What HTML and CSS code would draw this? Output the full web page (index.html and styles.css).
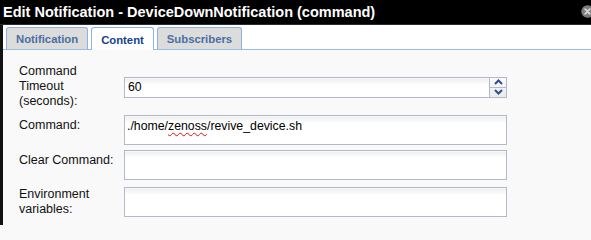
FILE: index.html
```html
<!DOCTYPE html>
<html>
<head>
<meta charset="utf-8">
<link rel="stylesheet" href="styles.css">
</head>
<body>
<div class="window">
  <div class="header">
    <span class="title">Edit Notification - DeviceDownNotification (command)</span>
    <span class="close">
      <svg width="13" height="13" viewBox="0 0 13 13">
        <circle cx="6.5" cy="6.5" r="6.2" fill="#7c7c7c"/>
        <path d="M4.2 4.2 L8.8 8.8 M8.8 4.2 L4.2 8.8" stroke="#d6d6d6" stroke-width="1.8" stroke-linecap="round"/>
      </svg>
    </span>
  </div>
  <div class="body">
    <div class="tabstrip">
      <div class="tab">Notification</div>
      <div class="tab active">Content</div>
      <div class="tab">Subscribers</div>
    </div>
    <div class="panel">
      <div class="row row-center">
        <label class="label label-tall">Command Timeout (seconds):</label>
        <div class="field spinner">
          <span class="value">60</span>
          <div class="spin">
            <span class="spin-btn">
              <svg width="9" height="6" viewBox="0 0 9 6"><polyline points="1,5 4.5,1.5 8,5" fill="none" stroke="#2e4e8c" stroke-width="2"/></svg>
            </span>
            <span class="spin-btn">
              <svg width="9" height="6" viewBox="0 0 9 6"><polyline points="1,1 4.5,4.5 8,1" fill="none" stroke="#2e4e8c" stroke-width="2"/></svg>
            </span>
          </div>
        </div>
      </div>
      <div class="row">
        <label class="label">Command:</label>
        <div class="field area">./home/<span class="misspelled">zenoss</span>/revive_device.sh</div>
      </div>
      <div class="row">
        <label class="label">Clear Command:</label>
        <div class="field area"></div>
      </div>
      <div class="row row-env">
        <label class="label label-flush">Environment variables:</label>
        <div class="field area"></div>
      </div>
    </div>
  </div>
</div>
</body>
</html>
```
FILE: styles.css
```css
html, body {
  margin: 0;
  padding: 0;
}
body {
  background: #f9f9f9;
  font-family: "Liberation Sans", Arial, sans-serif;
  overflow: hidden;
}
.window {
  width: 591px;
  height: 225px;
  background: #000;
  display: flex;
  flex-direction: column;
  overflow: hidden;
}
.header {
  height: 24px;
  flex: none;
  display: flex;
  align-items: center;
  padding-left: 3px;
  color: #fff;
  font-weight: bold;
  font-size: 14.5px;
  border-bottom: 1px solid #2a2a2a;
}
.title {
  white-space: nowrap;
}
.close {
  margin-left: auto;
  margin-right: -3px;
  margin-top: -2px;
  display: flex;
}
.body {
  flex: 1;
  border-left: 3px solid #111;
  display: flex;
  flex-direction: column;
  background: #f9f9f9;
}
.tabstrip {
  flex: none;
  height: 22px;
  padding: 2px 0 0 3px;
  background: #fff;
  border-bottom: 1px solid #99bbe8;
  display: flex;
  align-items: flex-end;
  gap: 3px;
}
.tab {
  height: 22px;
  box-sizing: border-box;
  border: 1px solid #8db2e3;
  border-bottom: none;
  border-radius: 3px 3px 0 0;
  background: #dcdcdc;
  padding: 0 9px;
  font-size: 11.3px;
  font-weight: bold;
  color: #4a6ea3;
  line-height: 22px;
  white-space: nowrap;
}
.tab.active {
  height: 23px;
  margin-bottom: -1px;
  background: #fff;
  color: #15428b;
  line-height: 24px;
}
.panel {
  flex: 1;
  padding: 14px 0 0 16px;
  display: flex;
  flex-direction: column;
  gap: 5px;
}
.row {
  display: grid;
  grid-template-columns: 105px 383px;
  align-items: start;
}
.row-center {
  align-items: center;
}
.row-env {
  padding-top: 2px;
}
.label {
  font-size: 12.5px;
  line-height: 15px;
  color: #111;
  padding: 3px 5px 0 0;
}
.label-tall {
  padding: 0 5px 1px 0;
}
.label-flush {
  padding: 0 5px 0 0;
}
.field {
  box-sizing: border-box;
  height: 30px;
  border: 1px solid #b5b8c8;
  background: linear-gradient(to bottom, #fff 0, #eef0f0 1px, #fff 7px);
  font-size: 12.3px;
  line-height: 15px;
  color: #000;
  padding: 3px 2px;
  white-space: nowrap;
  overflow: hidden;
}
.spinner {
  height: 21px;
  padding: 0;
  display: flex;
}
.value {
  flex: 1;
  padding: 2px 3px;
}
.spin {
  width: 17px;
  box-sizing: border-box;
  border-left: 1px solid #b5b8c8;
  display: flex;
  flex-direction: column;
  background: linear-gradient(to bottom, #fafafa, #ececec);
}
.spin-btn {
  flex: 1;
  display: flex;
  align-items: center;
  justify-content: center;
}
.spin-btn + .spin-btn {
  border-top: 1px solid #b5b8c8;
}
.misspelled {
  text-decoration: underline wavy #e01010;
  text-decoration-thickness: 1px;
  text-underline-offset: 2px;
}
```
